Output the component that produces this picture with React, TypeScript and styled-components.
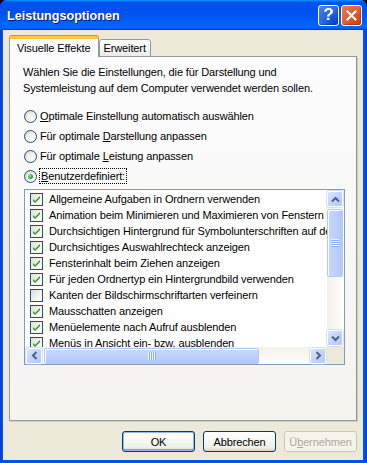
import React from 'react';
import styled, { createGlobalStyle } from 'styled-components';

// Global
const GlobalStyle = createGlobalStyle`
  html, body {
    margin: 0;
    padding: 0;
    background: #000;
  }
  body {
    font-family: "Liberation Sans", Arial, sans-serif;
    font-size: 11px;
    color: #000;
  }
`;

const ui = `
  font-family: "Liberation Sans", Arial, sans-serif;
  font-size: 11px;
  letter-spacing: -0.12px;
`;

// Frame
const Window = styled.div`
  width: 367px;
  height: 463px;
  display: flex;
  flex-direction: column;
  background: linear-gradient(90deg, #0831d9 0, #0054e3 2px, #0054e3 calc(100% - 2px), #0831d9 100%);
  border-radius: 7px 7px 0 0;
  overflow: hidden;
`;

const TitleBar = styled.div`
  height: 30px;
  flex: none;
  display: flex;
  align-items: center;
  padding: 0 5px 0 7px;
  background: linear-gradient(180deg, #0997ff, #0053ee 8%, #0050ee 40%, #0066ff 88%, #0066ff 93%, #005bff 95%, #003dd7 96%, #003dd7);
`;

const Title = styled.div`
  flex: 1;
  color: #fff;
  font-family: "Liberation Sans", Arial, sans-serif;
  font-weight: bold;
  font-size: 12.6px;
  text-shadow: 1px 1px 0 #0a1883;
  padding-top: 1px;
`;

const CaptionButton = styled.div<{ $kind: 'help' | 'close' }>`
  width: 21px;
  height: 21px;
  box-sizing: border-box;
  border: 1px solid #fff;
  border-radius: 3px;
  margin-left: 2px;
  display: flex;
  align-items: center;
  justify-content: center;
  color: #fff;
  font-family: "Liberation Sans", Arial, sans-serif;
  font-weight: bold;
  font-size: 17px;
  background: ${p =>
    p.$kind === 'close'
      ? 'radial-gradient(circle at 80% 85%, #cc4616 0, #e1592f 40%, #eb7a55 100%)'
      : 'radial-gradient(circle at 80% 85%, #0a45d0 0, #2463e6 45%, #4f86f0 100%)'};
  box-shadow: inset -1px -1px 1px rgba(0, 0, 0, 0.25);
`;

const Body = styled.div`
  flex: 1;
  margin: 0 4px 3px 3px;
  background: #ece9d8;
  padding: 6px 6px 0 6px;
  display: flex;
  flex-direction: column;
`;

// Tabs
const TabStrip = styled.div`
  display: flex;
  align-items: flex-end;
  height: 21px;
  position: relative;
  z-index: 1;
  margin-bottom: -1px;
`;

const Tab = styled.div<{ $active?: boolean }>`
  ${ui}
  box-sizing: border-box;
  height: ${p => (p.$active ? '21px' : '18px')};
  padding: ${p => (p.$active ? '3px 7px 0 7px' : '2px 4px 0 4px')};
  border: 1px solid #919b9c;
  border-bottom: ${p => (p.$active ? 'none' : '1px solid #919b9c')};
  border-top: ${p => (p.$active ? '3px solid #ffc83c' : '1px solid #919b9c')};
  border-radius: 3px 3px 0 0;
  background: ${p => (p.$active ? '#fcfcfe' : 'linear-gradient(#ffffff, #ecebe6)')};
  box-shadow: ${p => (p.$active ? '0 -1px 0 #e68b2c' : 'none')};
  white-space: nowrap;
`;

const Panel = styled.div`
  height: 365px;
  box-sizing: border-box;
  border: 1px solid #919b9c;
  border-right-color: #8a9294;
  box-shadow: 1px 1px 0 #d0cec1;
  background: linear-gradient(#fcfcfe, #f4f3ee);
  padding: 7px 13px 0 13px;
`;

const Intro = styled.p`
  ${ui}
  margin: 0 0 10px;
  line-height: 16px;
  white-space: nowrap;
`;

// Radios
const RadioRow = styled.div`
  ${ui}
  display: flex;
  align-items: center;
  height: 20px;
  padding-left: 1px;
`;

const RadioDot = styled.span<{ $on?: boolean }>`
  width: 13px;
  height: 13px;
  box-sizing: border-box;
  border-radius: 50%;
  border: 1px solid #1c5180;
  background: radial-gradient(circle at 70% 70%, #ffffff 0, #f3f2ee 40%, #d4d0c4 100%);
  margin-right: 3px;
  display: flex;
  align-items: center;
  justify-content: center;
  &::after {
    content: '';
    display: ${p => (p.$on ? 'block' : 'none')};
    width: 5px;
    height: 5px;
    border-radius: 50%;
    background: radial-gradient(circle at 35% 35%, #9be29b 0, #31b331 50%, #1c8c1c 100%);
  }
`;

const Focus = styled.span`
  outline: 1px dotted #000;
  outline-offset: 0;
  padding: 0 1px;
  line-height: 14px;
`;

const Key = styled.span`
  text-decoration: underline;
  text-underline-offset: 1px;
`;

// List
const ListBox = styled.div`
  margin: 3px 0 0 1px;
  width: 321px;
  height: 176px;
  box-sizing: border-box;
  border: 1px solid #7f9db9;
  background: #fff;
  display: grid;
  grid-template-columns: 1fr 17px;
  grid-template-rows: 1fr 17px;
`;

const ListItems = styled.div`
  overflow: hidden;
  padding-top: 1px;
`;

const Item = styled.div`
  ${ui}
  display: flex;
  align-items: center;
  height: 16px;
  padding-left: 5px;
  white-space: nowrap;
`;

const CheckBox = styled.span`
  flex: none;
  width: 13px;
  height: 13px;
  box-sizing: border-box;
  border: 1px solid #1c5180;
  background: linear-gradient(135deg, #dcdbd5 0, #f5f4f0 60%, #ffffff 100%);
  margin-right: 6px;
  display: flex;
  align-items: center;
  justify-content: center;
`;

const VScroll = styled.div`
  display: flex;
  flex-direction: column;
  background: linear-gradient(90deg, #f3f1ec, #fefefb);
  padding: 1px 0;
`;

const HScroll = styled.div`
  display: flex;
  align-items: center;
  background: linear-gradient(#f3f1ec, #fefefb);
  padding: 0 1px;
`;

const Corner = styled.div`
  background: #ece9d8;
`;

const Arrow = styled.div`
  flex: none;
  width: 16px;
  height: 16px;
  box-sizing: border-box;
  border: 1px solid #fff;
  border-radius: 2px;
  background: linear-gradient(135deg, #d8e4fd 0, #c3d3fd 50%, #b4c8f6 100%);
  box-shadow: 0 0 0 0.5px #b1c5f3;
  display: flex;
  align-items: center;
  justify-content: center;
`;

const VThumb = styled.div`
  margin-top: 2px;
  height: 68px;
  width: 16px;
  box-sizing: border-box;
  border: 1px solid #b5c9f7;
  border-radius: 2px;
  background: linear-gradient(90deg, #c9d8fc, #bccffa 60%, #b2c6f6);
  box-shadow: inset 1px 1px 0 #fff;
  display: flex;
  align-items: center;
  justify-content: center;
`;

const HThumb = styled.div`
  margin-left: 2px;
  width: 215px;
  height: 16px;
  box-sizing: border-box;
  border: 1px solid #b5c9f7;
  border-radius: 2px;
  background: linear-gradient(#c9d8fc, #bccffa 60%, #b2c6f6);
  box-shadow: inset 1px 1px 0 #fff;
  display: flex;
  align-items: center;
  justify-content: center;
`;

const Spacer = styled.div`
  flex: 1;
`;

// Buttons
const ButtonRow = styled.div`
  display: flex;
  justify-content: flex-end;
  gap: 8px;
  margin-top: 10px;
`;

const Button = styled.div<{ $default?: boolean; $disabled?: boolean }>`
  ${ui}
  width: 73px;
  height: 21px;
  box-sizing: border-box;
  border: 1px solid ${p => (p.$disabled ? '#c9c7ba' : '#003c74')};
  border-radius: 3px;
  display: flex;
  align-items: center;
  justify-content: center;
  color: ${p => (p.$disabled ? '#aca899' : '#000')};
  background: ${p => (p.$disabled ? '#f5f4ea' : 'linear-gradient(#ffffff, #f0f0ea 80%, #d6d0c5)')};
  box-shadow: ${p => (p.$default ? 'inset 0 0 0 1px #98b8ea, inset 0 -1px 0 1px #7b9de0' : 'none')};
`;

const items: [string, boolean][] = [
  ['Allgemeine Aufgaben in Ordnern verwenden', true],
  ['Animation beim Minimieren und Maximieren von Fenstern', true],
  ['Durchsichtigen Hintergrund für Symbolunterschriften auf dem Desktop', true],
  ['Durchsichtiges Auswahlrechteck anzeigen', true],
  ['Fensterinhalt beim Ziehen anzeigen', true],
  ['Für jeden Ordnertyp ein Hintergrundbild verwenden', true],
  ['Kanten der Bildschirmschriftarten verfeinern', false],
  ['Mausschatten anzeigen', true],
  ['Menüelemente nach Aufruf ausblenden', true],
  ['Menüs in Ansicht ein- bzw. ausblenden', true],
];

const Check = () => (
  <svg width="9" height="9" viewBox="0 0 9 9">
    <path d="M1 4 L3 6 L8 1 L8 3 L3 8 L1 6 Z" fill="#21a121" />
  </svg>
);

const Chevron = ({ dir }: { dir: 'up' | 'down' | 'left' | 'right' }) => {
  const rot = { up: 0, right: 90, down: 180, left: 270 }[dir];
  return (
    <svg width="9" height="9" viewBox="0 0 9 9" style={{ transform: `rotate(${rot}deg)` }}>
      <path d="M1 6.5 L4.5 3 L8 6.5" fill="none" stroke="#4d6185" strokeWidth="2" />
    </svg>
  );
};

const Grip = ({ vertical }: { vertical?: boolean }) => (
  <svg width="8" height="8" viewBox="0 0 8 8" style={{ transform: vertical ? 'rotate(90deg)' : undefined }}>
    {[0, 2, 4, 6].map(x => (
      <g key={x}>
        <rect x={x} y="0" width="1" height="8" fill="#eef4fe" />
        <rect x={x + 1} y="0" width="1" height="8" fill="#8cb0f8" />
      </g>
    ))}
  </svg>
);

function App() {
  return (
    <>
      <GlobalStyle />
      <Window>
        <TitleBar>
          <Title>Leistungsoptionen</Title>
          <CaptionButton $kind="help">?</CaptionButton>
          <CaptionButton $kind="close">
            <svg width="11" height="11" viewBox="0 0 11 11">
              <path d="M1.5 1.5 L9.5 9.5 M9.5 1.5 L1.5 9.5" stroke="#fff" strokeWidth="2.2" strokeLinecap="square" />
            </svg>
          </CaptionButton>
        </TitleBar>
        <Body>
          <TabStrip>
            <Tab $active>Visuelle Effekte</Tab>
            <Tab>Erweitert</Tab>
          </TabStrip>
          <Panel>
            <Intro>
              Wählen Sie die Einstellungen, die für Darstellung und
              <br />
              Systemleistung auf dem Computer verwendet werden sollen.
            </Intro>
            <RadioRow>
              <RadioDot />
              <span><Key>O</Key>ptimale Einstellung automatisch auswählen</span>
            </RadioRow>
            <RadioRow>
              <RadioDot />
              <span>Für optimale <Key>D</Key>arstellung anpassen</span>
            </RadioRow>
            <RadioRow>
              <RadioDot />
              <span>Für optimale <Key>L</Key>eistung anpassen</span>
            </RadioRow>
            <RadioRow>
              <RadioDot $on />
              <Focus><Key>B</Key>enutzerdefiniert:</Focus>
            </RadioRow>
            <ListBox>
              <ListItems>
                {items.map(([label, on]) => (
                  <Item key={label}>
                    <CheckBox>{on && <Check />}</CheckBox>
                    {label}
                  </Item>
                ))}
              </ListItems>
              <VScroll>
                <Arrow><Chevron dir="up" /></Arrow>
                <VThumb><Grip vertical /></VThumb>
                <Spacer />
                <Arrow><Chevron dir="down" /></Arrow>
              </VScroll>
              <HScroll>
                <Arrow><Chevron dir="left" /></Arrow>
                <HThumb><Grip /></HThumb>
                <Spacer />
                <Arrow><Chevron dir="right" /></Arrow>
              </HScroll>
              <Corner />
            </ListBox>
          </Panel>
          <ButtonRow>
            <Button $default>OK</Button>
            <Button>Abbrechen</Button>
            <Button $disabled>Ü<Key>b</Key>ernehmen</Button>
          </ButtonRow>
        </Body>
      </Window>
    </>
  );
}

export default App;
